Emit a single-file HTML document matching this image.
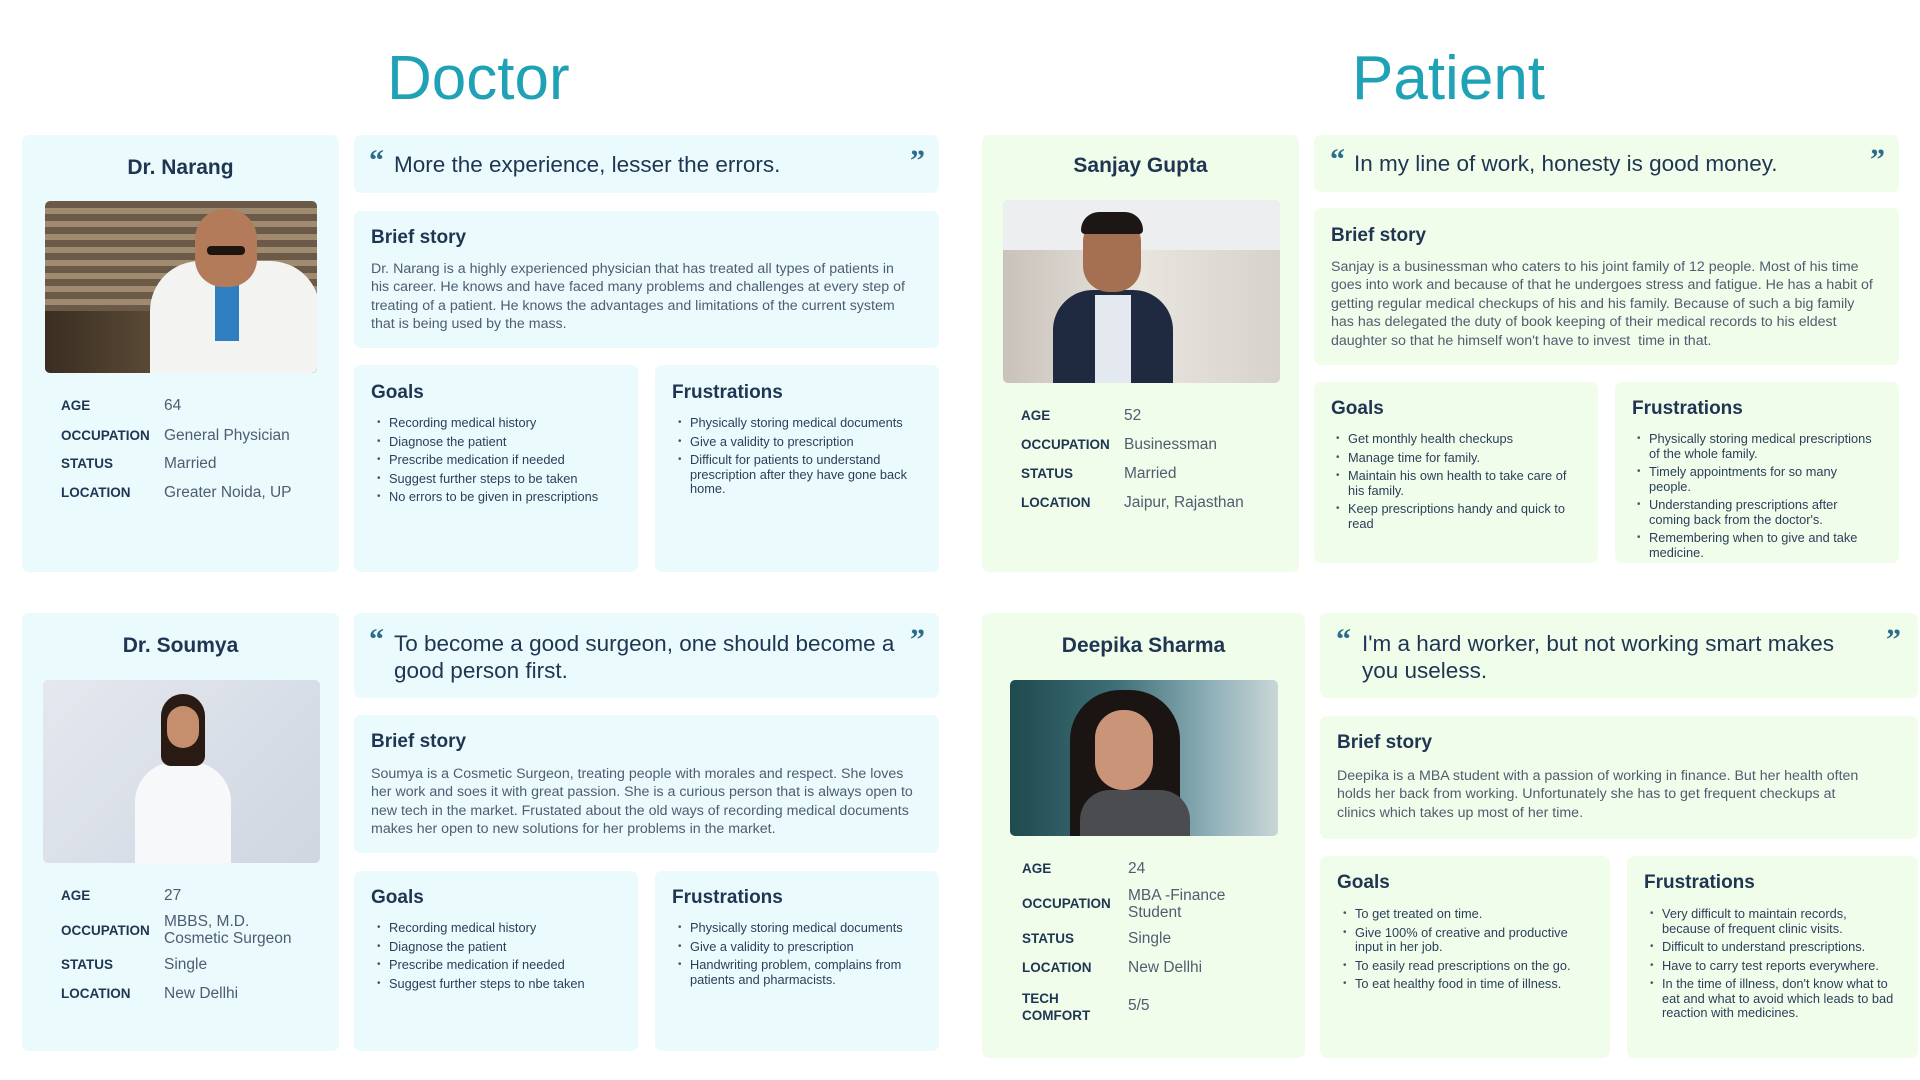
<!DOCTYPE html>
<html><head><meta charset="utf-8"><style>
*{margin:0;padding:0;box-sizing:border-box}
body{width:1920px;height:1080px;background:#fff;position:relative;overflow:hidden;font-family:"Liberation Sans",sans-serif;color:#1f3552}
.a{position:absolute}
.t{position:absolute;font-family:"Liberation Sans",sans-serif;color:#1fa2b6;font-size:62px;line-height:1}
.cd{position:absolute;background:#eafafd;border-radius:7px}
.cp{position:absolute;background:#f1fdeb;border-radius:7px}
.nm{position:absolute;font-weight:bold;font-size:21px;text-align:center;color:#1f3552;line-height:26px}
.ph{position:absolute;border-radius:5px;overflow:hidden}
.lb{position:absolute;font-weight:bold;font-size:13.5px;color:#1f3552;line-height:17px}
.vl{position:absolute;font-size:15.5px;color:#4f5d70;line-height:17px}
.q1,.q2{position:absolute;font-family:"Liberation Serif",serif;font-weight:bold;font-size:30px;color:#2a6d8c;line-height:30px}
.qt{position:absolute;font-size:22.5px;color:#1f3552;line-height:27px;white-space:nowrap}
.h{position:absolute;font-weight:bold;font-size:19px;color:#1f3552;line-height:22px}
.bd{position:absolute;font-size:14.2px;color:#4f5d70;line-height:18.4px;white-space:nowrap}
ul{position:absolute;list-style:none;font-size:12.8px;color:#2c3e5a;line-height:14.5px}
li{position:relative;padding-left:12px;margin-bottom:4px;white-space:nowrap}
li:before{content:"•";position:absolute;left:0;top:0;font-size:10px;color:#555}
</style></head><body>

<div class="t" style="left:387px;top:48px">Doctor</div>
<div class="t" style="left:1352px;top:48px">Patient</div>

<!-- Doctor row 1 -->
<div class="cd" style="left:22px;top:135px;width:317px;height:437px"></div>
<div class="nm" style="left:22px;top:155px;width:317px">Dr. Narang</div>
<div class="ph" style="left:45px;top:201px;width:272px;height:172px;background:repeating-linear-gradient(180deg,#6b5a47 0 7px,#a08a70 7px 13px)">
 <div class="a" style="left:0;top:110px;width:272px;height:62px;background:linear-gradient(90deg,#3a2e22,#5a4a35 40%,#3a3025)"></div>
 <div class="a" style="left:105px;top:60px;width:170px;height:112px;background:#f3f3f2;border-radius:50px 50px 0 0"></div>
 <div class="a" style="left:170px;top:80px;width:24px;height:60px;background:#2f7fc0"></div>
 <div class="a" style="left:150px;top:8px;width:62px;height:78px;background:#b47b5a;border-radius:30px 30px 28px 28px"></div>
 <div class="a" style="left:162px;top:45px;width:38px;height:9px;background:#1e1410;border-radius:4px"></div>
</div>
<div class="lb" style="left:61px;top:397px">AGE</div><div class="vl" style="left:164px;top:397px">64</div>
<div class="lb" style="left:61px;top:427px">OCCUPATION</div><div class="vl" style="left:164px;top:427px">General Physician</div>
<div class="lb" style="left:61px;top:455px">STATUS</div><div class="vl" style="left:164px;top:455px">Married</div>
<div class="lb" style="left:61px;top:484px">LOCATION</div><div class="vl" style="left:164px;top:484px">Greater Noida, UP</div>

<div class="cd" style="left:354px;top:135px;width:585px;height:58px"></div>
<div class="q1" style="left:369px;top:146px">“</div><div class="q2" style="left:910px;top:146px">”</div>
<div class="qt" style="left:394px;top:151px">More the experience, lesser the errors.</div>

<div class="cd" style="left:354px;top:211px;width:585px;height:137px"></div>
<div class="h" style="left:371px;top:227px">Brief story</div>
<div class="bd" style="left:371px;top:260px">Dr. Narang is a highly experienced physician that has treated all types of patients in<br>his career. He knows and have faced many problems and challenges at every step of<br>treating of a patient. He knows the advantages and limitations of the current system<br>that is being used by the mass.</div>

<div class="cd" style="left:354px;top:365px;width:284px;height:207px"></div>
<div class="h" style="left:371px;top:382px">Goals</div>
<ul style="left:377px;top:416px"><li>Recording medical history</li><li>Diagnose the patient</li><li>Prescribe medication if needed</li><li>Suggest further steps to be taken</li><li>No errors to be given in prescriptions</li></ul>
<div class="cd" style="left:655px;top:365px;width:284px;height:207px"></div>
<div class="h" style="left:672px;top:382px">Frustrations</div>
<ul style="left:678px;top:416px"><li>Physically storing medical documents</li><li>Give a validity to prescription</li><li>Difficult for patients to understand<br>prescription after they have gone back<br>home.</li></ul>

<!-- Doctor row 2 -->
<div class="cd" style="left:22px;top:613px;width:317px;height:438px"></div>
<div class="nm" style="left:22px;top:633px;width:317px">Dr. Soumya</div>
<div class="ph" style="left:43px;top:680px;width:277px;height:183px;background:linear-gradient(135deg,#e4e8ef,#cfd6e1)">
 <div class="a" style="left:92px;top:82px;width:96px;height:101px;background:#f7f8fa;border-radius:40px 40px 0 0"></div>
 <div class="a" style="left:118px;top:14px;width:44px;height:72px;background:#2a1a14;border-radius:22px 22px 10px 10px"></div>
 <div class="a" style="left:124px;top:26px;width:32px;height:42px;background:#c58e6c;border-radius:16px"></div>
</div>
<div class="lb" style="left:61px;top:887px">AGE</div><div class="vl" style="left:164px;top:887px">27</div>
<div class="lb" style="left:61px;top:922px">OCCUPATION</div><div class="vl" style="left:164px;top:913px">MBBS, M.D.<br>Cosmetic Surgeon</div>
<div class="lb" style="left:61px;top:956px">STATUS</div><div class="vl" style="left:164px;top:956px">Single</div>
<div class="lb" style="left:61px;top:985px">LOCATION</div><div class="vl" style="left:164px;top:985px">New Dellhi</div>

<div class="cd" style="left:354px;top:613px;width:585px;height:85px"></div>
<div class="q1" style="left:369px;top:625px">“</div><div class="q2" style="left:910px;top:625px">”</div>
<div class="qt" style="left:394px;top:630px">To become a good surgeon, one should become a<br>good person first.</div>

<div class="cd" style="left:354px;top:715px;width:585px;height:138px"></div>
<div class="h" style="left:371px;top:731px">Brief story</div>
<div class="bd" style="left:371px;top:765px">Soumya is a Cosmetic Surgeon, treating people with morales and respect. She loves<br>her work and soes it with great passion. She is a curious person that is always open to<br>new tech in the market. Frustated about the old ways of recording medical documents<br>makes her open to new solutions for her problems in the market.</div>

<div class="cd" style="left:354px;top:871px;width:284px;height:180px"></div>
<div class="h" style="left:371px;top:887px">Goals</div>
<ul style="left:377px;top:921px"><li>Recording medical history</li><li>Diagnose the patient</li><li>Prescribe medication if needed</li><li>Suggest further steps to nbe taken</li></ul>
<div class="cd" style="left:655px;top:871px;width:284px;height:180px"></div>
<div class="h" style="left:672px;top:887px">Frustrations</div>
<ul style="left:678px;top:921px"><li>Physically storing medical documents</li><li>Give a validity to prescription</li><li>Handwriting problem, complains from<br>patients and pharmacists.</li></ul>

<!-- Patient row 1 -->
<div class="cp" style="left:982px;top:135px;width:317px;height:437px"></div>
<div class="nm" style="left:982px;top:153px;width:317px">Sanjay Gupta</div>
<div class="ph" style="left:1003px;top:200px;width:277px;height:183px;background:linear-gradient(90deg,#c9c2bb,#e8e4de 50%,#d7d2cb)">
 <div class="a" style="left:0;top:0;width:277px;height:50px;background:#eceef0"></div>
 <div class="a" style="left:50px;top:90px;width:120px;height:93px;background:#1f2a40;border-radius:40px 40px 0 0"></div>
 <div class="a" style="left:92px;top:95px;width:36px;height:88px;background:#e4e8ef"></div>
 <div class="a" style="left:80px;top:16px;width:58px;height:76px;background:#a56f52;border-radius:26px"></div>
 <div class="a" style="left:78px;top:12px;width:62px;height:22px;background:#1c1614;border-radius:28px 28px 6px 6px"></div>
</div>
<div class="lb" style="left:1021px;top:407px">AGE</div><div class="vl" style="left:1124px;top:407px">52</div>
<div class="lb" style="left:1021px;top:436px">OCCUPATION</div><div class="vl" style="left:1124px;top:436px">Businessman</div>
<div class="lb" style="left:1021px;top:465px">STATUS</div><div class="vl" style="left:1124px;top:465px">Married</div>
<div class="lb" style="left:1021px;top:494px">LOCATION</div><div class="vl" style="left:1124px;top:494px">Jaipur, Rajasthan</div>

<div class="cp" style="left:1314px;top:135px;width:585px;height:57px"></div>
<div class="q1" style="left:1330px;top:145px">“</div><div class="q2" style="left:1870px;top:145px">”</div>
<div class="qt" style="left:1354px;top:150px">In my line of work, honesty is good money.</div>

<div class="cp" style="left:1314px;top:208px;width:585px;height:157px"></div>
<div class="h" style="left:1331px;top:225px">Brief story</div>
<div class="bd" style="left:1331px;top:258px">Sanjay is a businessman who caters to his joint family of 12 people. Most of his time<br>goes into work and because of that he undergoes stress and fatigue. He has a habit of<br>getting regular medical checkups of his and his family. Because of such a big family<br>has has delegated the duty of book keeping of their medical records to his eldest<br>daughter so that he himself won't have to invest &nbsp;time in that.</div>

<div class="cp" style="left:1314px;top:382px;width:284px;height:181px"></div>
<div class="h" style="left:1331px;top:398px">Goals</div>
<ul style="left:1336px;top:432px"><li>Get monthly health checkups</li><li>Manage time for family.</li><li>Maintain his own health to take care of<br>his family.</li><li>Keep prescriptions handy and quick to<br>read</li></ul>
<div class="cp" style="left:1615px;top:382px;width:284px;height:181px"></div>
<div class="h" style="left:1632px;top:398px">Frustrations</div>
<ul style="left:1637px;top:432px"><li>Physically storing medical prescriptions<br>of the whole family.</li><li>Timely appointments for so many<br>people.</li><li>Understanding prescriptions after<br>coming back from the doctor's.</li><li>Remembering when to give and take<br>medicine.</li></ul>

<!-- Patient row 2 -->
<div class="cp" style="left:982px;top:613px;width:323px;height:445px"></div>
<div class="nm" style="left:982px;top:633px;width:323px">Deepika Sharma</div>
<div class="ph" style="left:1010px;top:680px;width:268px;height:156px;background:linear-gradient(90deg,#1f4a4e,#3f6f78 40%,#8fb0b8 75%,#c9d6d6)">
 <div class="a" style="left:60px;top:10px;width:110px;height:146px;background:#1a1412;border-radius:50px 50px 0 0"></div>
 <div class="a" style="left:85px;top:30px;width:58px;height:80px;background:#c99478;border-radius:28px"></div>
 <div class="a" style="left:70px;top:110px;width:110px;height:46px;background:#4b4c50;border-radius:30px 30px 0 0"></div>
</div>
<div class="lb" style="left:1022px;top:860px">AGE</div><div class="vl" style="left:1128px;top:860px">24</div>
<div class="lb" style="left:1022px;top:895px">OCCUPATION</div><div class="vl" style="left:1128px;top:887px">MBA -Finance<br>Student</div>
<div class="lb" style="left:1022px;top:930px">STATUS</div><div class="vl" style="left:1128px;top:930px">Single</div>
<div class="lb" style="left:1022px;top:959px">LOCATION</div><div class="vl" style="left:1128px;top:959px">New Dellhi</div>
<div class="lb" style="left:1022px;top:990px">TECH<br>COMFORT</div><div class="vl" style="left:1128px;top:997px">5/5</div>

<div class="cp" style="left:1320px;top:613px;width:598px;height:85px"></div>
<div class="q1" style="left:1336px;top:625px">“</div><div class="q2" style="left:1886px;top:625px">”</div>
<div class="qt" style="left:1362px;top:630px">I'm a hard worker, but not working smart makes<br>you useless.</div>

<div class="cp" style="left:1320px;top:716px;width:598px;height:123px"></div>
<div class="h" style="left:1337px;top:732px">Brief story</div>
<div class="bd" style="left:1337px;top:767px">Deepika is a MBA student with a passion of working in finance. But her health often<br>holds her back from working. Unfortunately she has to get frequent checkups at<br>clinics which takes up most of her time.</div>

<div class="cp" style="left:1320px;top:856px;width:290px;height:202px"></div>
<div class="h" style="left:1337px;top:872px">Goals</div>
<ul style="left:1343px;top:907px"><li>To get treated on time.</li><li>Give 100% of creative and productive<br>input in her job.</li><li>To easily read prescriptions on the go.</li><li>To eat healthy food in time of illness.</li></ul>
<div class="cp" style="left:1627px;top:856px;width:291px;height:202px"></div>
<div class="h" style="left:1644px;top:872px">Frustrations</div>
<ul style="left:1650px;top:907px"><li>Very difficult to maintain records,<br>because of frequent clinic visits.</li><li>Difficult to understand prescriptions.</li><li>Have to carry test reports everywhere.</li><li>In the time of illness, don't know what to<br>eat and what to avoid which leads to bad<br>reaction with medicines.</li></ul>

</body></html>
